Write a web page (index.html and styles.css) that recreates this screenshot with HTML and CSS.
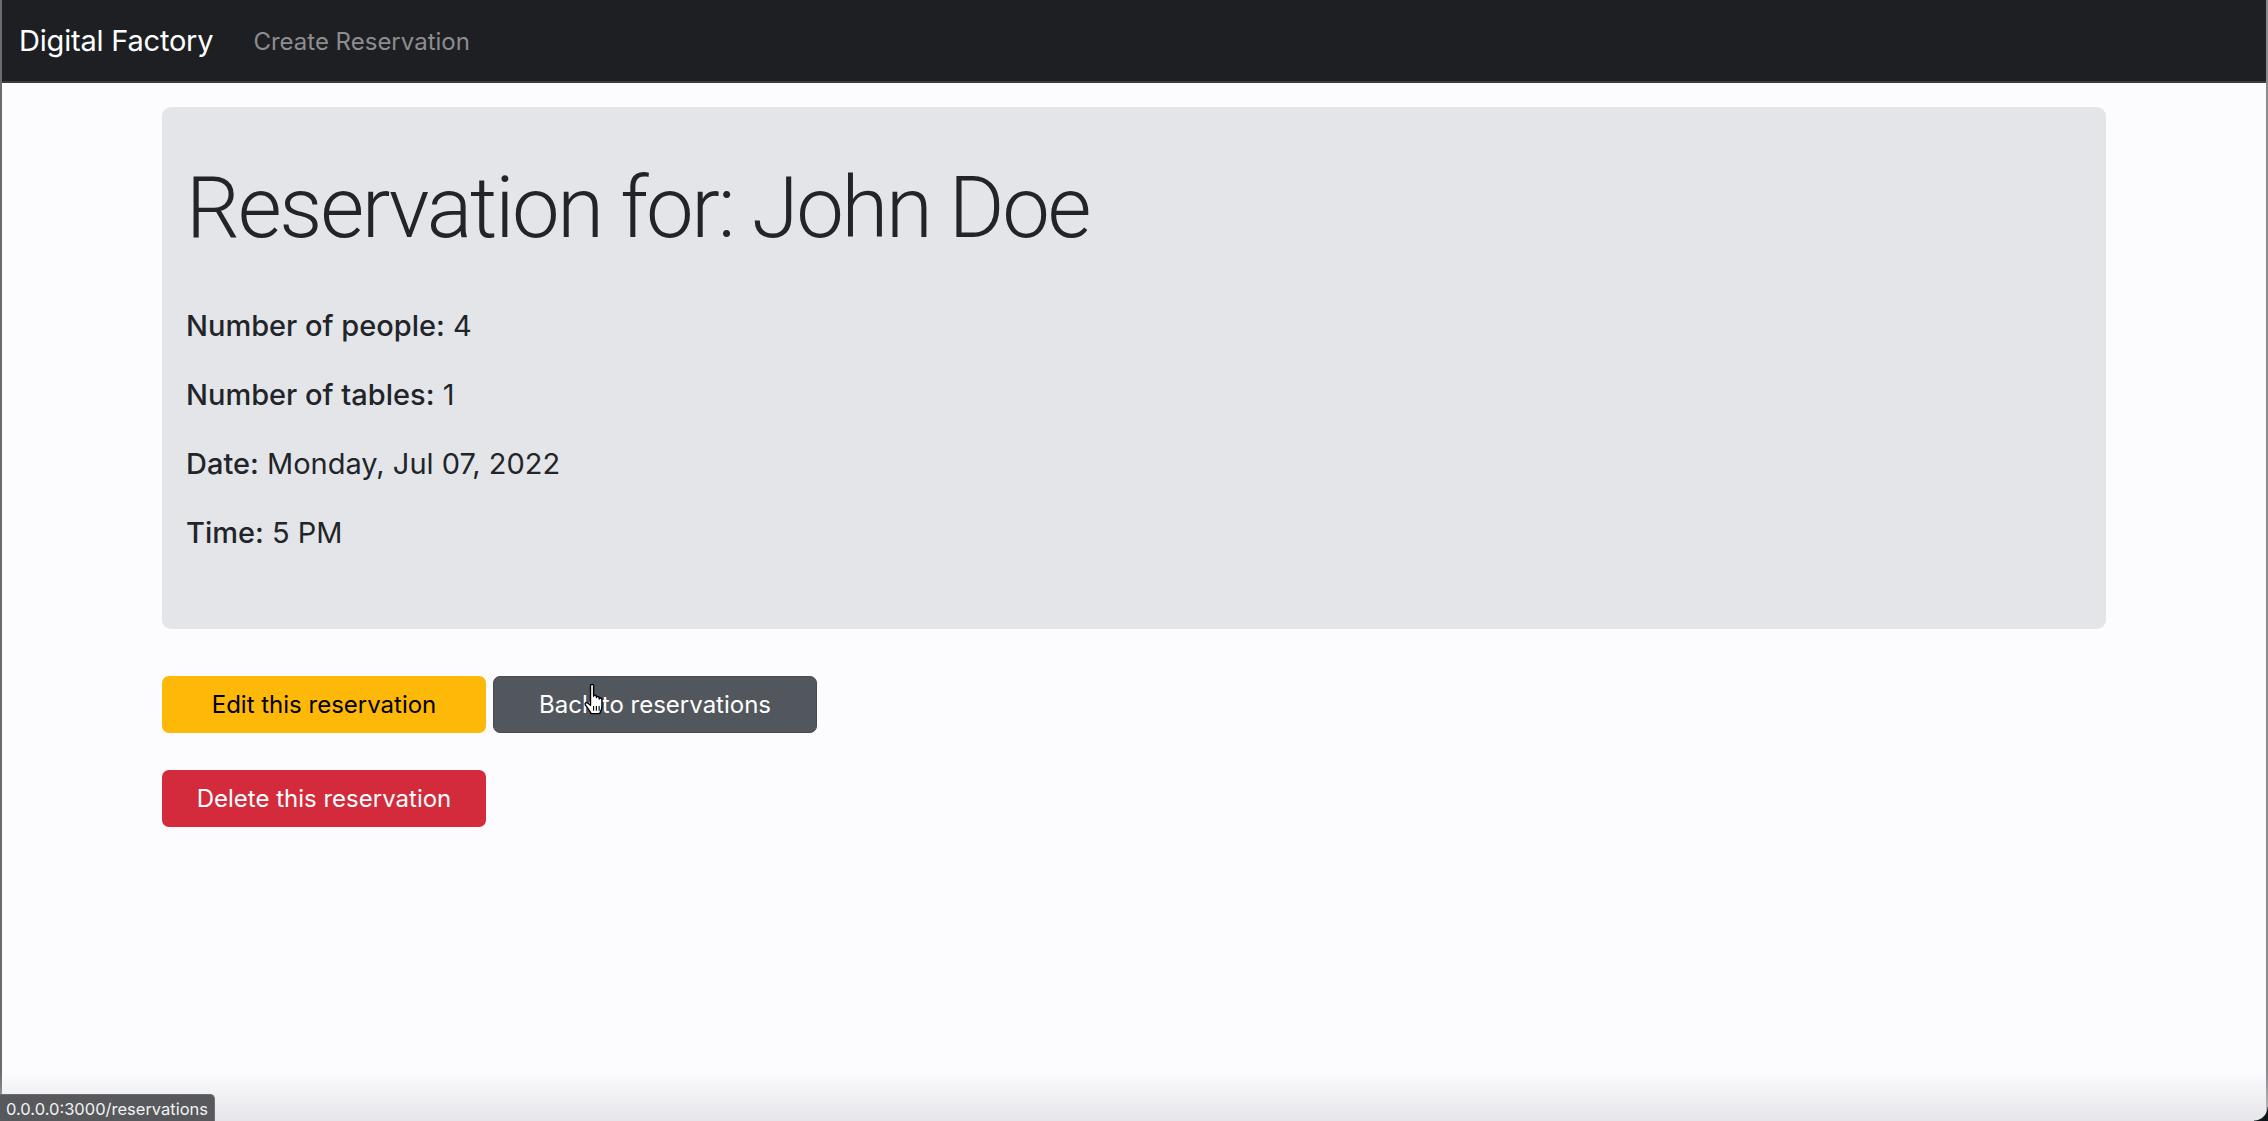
FILE: index.html
```html
<!DOCTYPE html>
<html lang="en">
<head>
<meta charset="utf-8">
<title>Digital Factory</title>
<link rel="stylesheet" href="styles.css">
</head>
<body>
<nav class="navbar">
  <a class="brand" href="#">Digital Factory</a>
  <a class="nav-link" href="#">Create Reservation</a>
</nav>
<main class="container">
  <section class="card">
    <h1 class="title">Reservation for: John Doe</h1>
    <p class="lead"><span class="label-plain">Number of people:</span> 4</p>
    <p class="lead"><span class="label-plain">Number of tables:</span> 1</p>
    <p class="lead"><strong class="label">Date:</strong> Monday, Jul 07, 2022</p>
    <p class="lead"><strong class="label">Time:</strong> 5 PM</p>
  </section>
  <div class="actions">
    <a class="btn btn-warning" href="#">Edit this reservation</a>
    <a class="btn btn-secondary" href="#">Back to reservations<svg class="cursor" width="22" height="32" viewBox="0 0 15 23"><path d="M5 2C5 0.7 7.2 0.7 7.2 2V9.5C7.2 8.5 9.2 8.5 9.2 9.5V10.5C9.2 9.5 11.2 9.5 11.2 10.5V11.5C11.2 10.5 13.2 10.5 13.2 11.5V17C13.2 19 12.2 20.5 11.5 22H5.5C4.7 20.5 2.5 17.5 1.3 15.8C0.6 14.7 1.8 13.5 2.9 14.4L5 16Z" fill="#fff" stroke="#000" stroke-width="1" stroke-linejoin="round"/><path d="M7.2 16.5v3.5M9.2 16.5v3.5M11.2 16.5v3.5" stroke="#000" stroke-width="0.8"/></svg></a>
  </div>
  <div class="actions">
    <a class="btn btn-danger" href="#">Delete this reservation</a>
  </div>
</main>
<div class="status">0.0.0.0:3000/reservations</div>
<div class="window-shade"></div>
<div class="corner"></div>
</body>
</html>
```
FILE: styles.css
```css
* { box-sizing: border-box; }
html, body { height: 100%; }
body {
  margin: 0;
  background: #fcfbfe;
  color: #212529;
  font-family: Inter, "Noto Sans", "Liberation Sans", sans-serif;
  overflow: hidden;
  border-left: 2px solid #6b6c70;
  border-right: 2px solid #8a8b8f;
}
a { text-decoration: none; }
.navbar {
  height: 83px;
  background: #1d1f23;
  border-bottom: 2px solid #3a3c40;
  display: flex;
  align-items: center;
  padding-left: 17px;
  gap: 40px;
}
.brand {
  color: #ffffff;
  font-size: 29px;
  font-weight: 400;
  letter-spacing: -0.2px;
}
.nav-link {
  color: #8c8d90;
  font-size: 24px;
  padding-top: 2px;
}
.container {
  width: 1944px;
  margin: 24px 0 0 160px;
}
.card {
  background: #e4e5e9;
  border-radius: 9px;
  padding: 50px 24px 50px 24px;
}
.title {
  margin: 0 0 44px 0;
  font-family: Roboto, Inter, sans-serif;
  font-size: 85px;
  font-weight: 300;
  line-height: 1.2;
  letter-spacing: -2.3px;
  color: #212529;
}
.lead {
  margin: 0 0 24px 0;
  font-size: 29px;
  line-height: 45px;
  color: #212529;
}
.label { font-weight: 500; }
.label-plain { font-weight: 450; }
.actions {
  display: flex;
  gap: 7px;
  margin-top: 47px;
}
.actions + .actions { margin-top: 37px; }
.btn {
  position: relative;
  width: 324px;
  height: 57px;
  border-radius: 7px;
  display: flex;
  align-items: center;
  justify-content: center;
  font-size: 24px;
  border: 1px solid transparent;
}
.btn-warning { background: #feb808; color: #000; }
.btn-secondary { background: #52565d; color: #fff; border-color: #474b51; }
.btn-danger { background: #d32b3c; color: #fff; }
.cursor {
  position: absolute;
  left: 89px;
  top: 6px;
}
.status {
  position: fixed;
  left: 0;
  bottom: 0;
  height: 27px;
  padding: 0 6px 0 6px;
  background: #58595d;
  color: #f2f2f2;
  font-size: 16.5px;
  line-height: 29px;
  border-top-right-radius: 5px;
  border: 1px solid #6d6e72;
  border-left: 0;
  border-bottom: 0;
  z-index: 2;
}
.window-shade {
  position: fixed;
  left: 0;
  right: 0;
  bottom: 0;
  height: 48px;
  background: linear-gradient(to bottom, rgba(220,219,224,0), rgba(220,219,224,0.7));
  pointer-events: none;
  z-index: 1;
}
.corner {
  position: fixed;
  right: 0;
  bottom: 0;
  width: 14px;
  height: 14px;
  background: radial-gradient(circle at 0 0, transparent 13px, #10151c 14px);
  z-index: 3;
}
```
